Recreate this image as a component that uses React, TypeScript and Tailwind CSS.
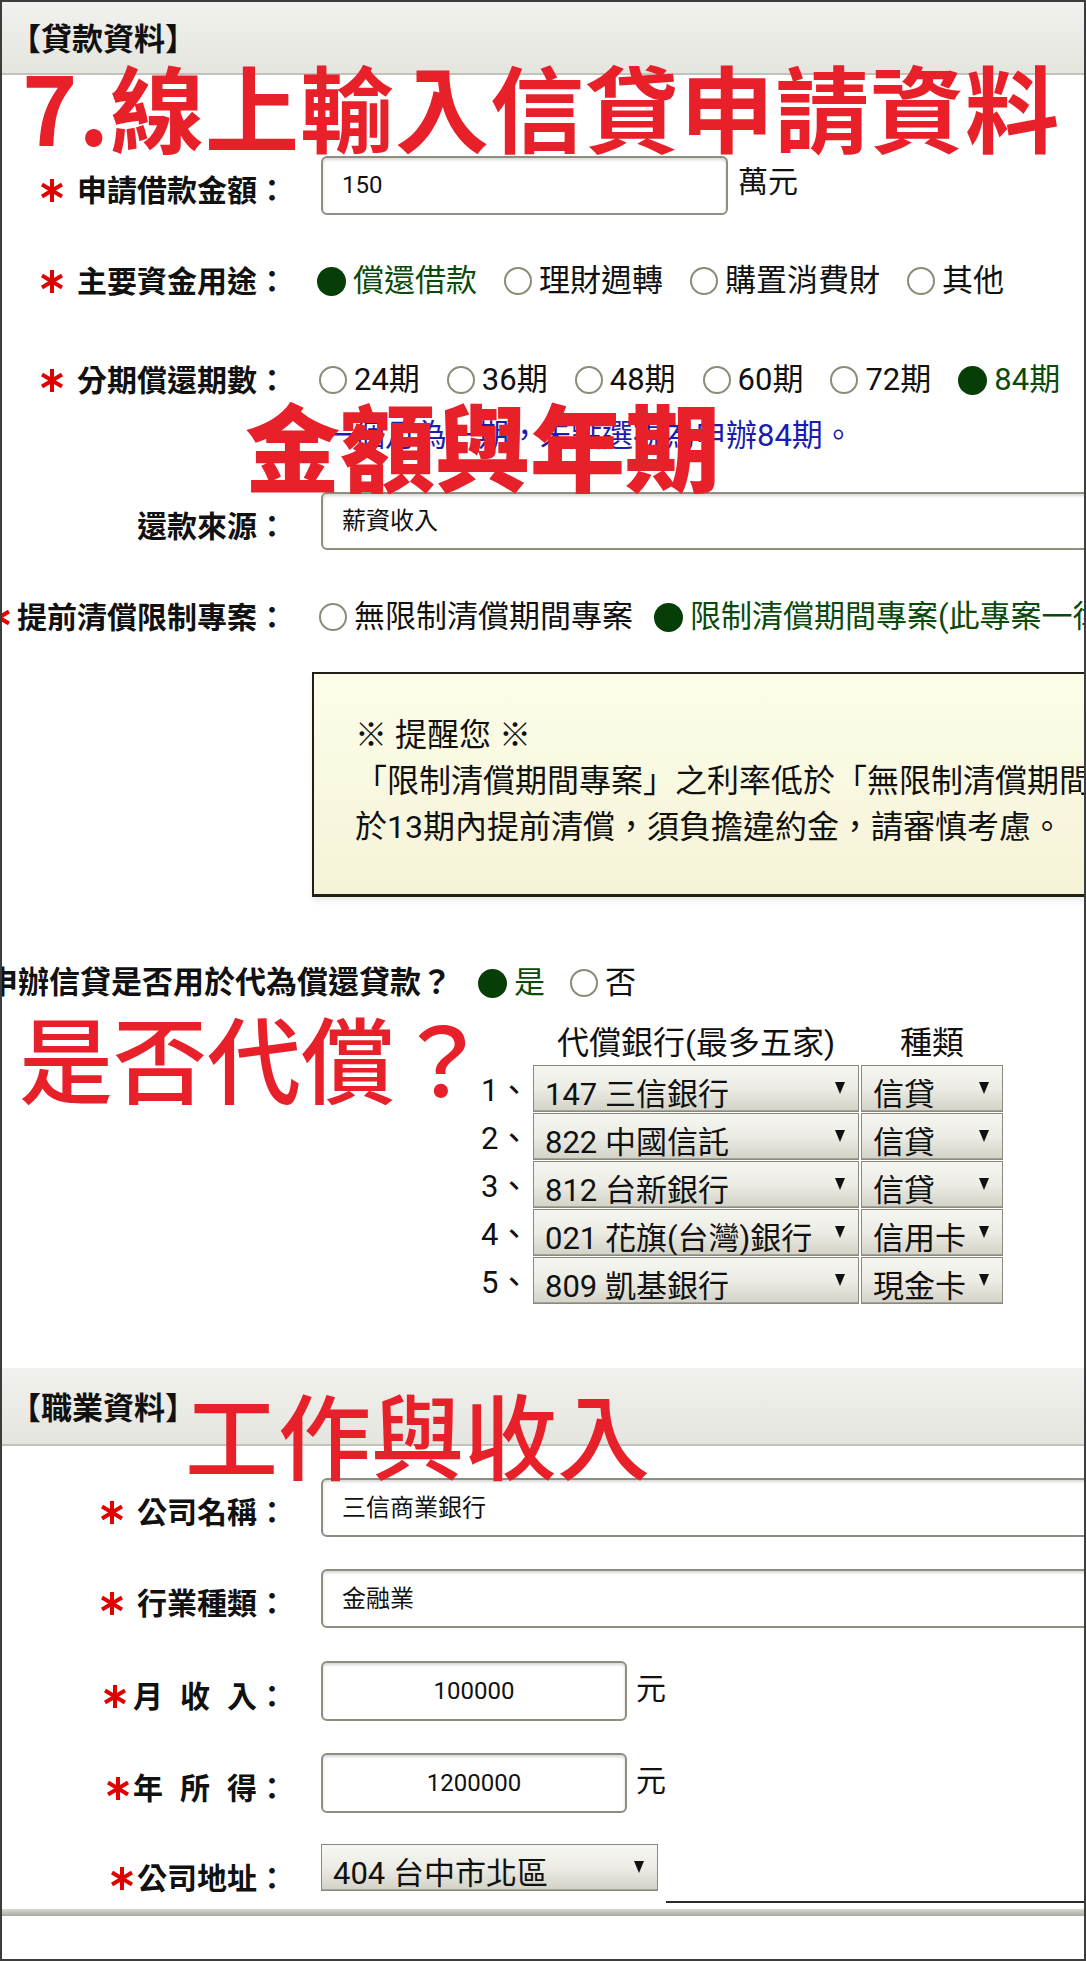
import React from "react";

const BANKS = [
  { bank: "147 三信銀行", kind: "信貸" },
  { bank: "822 中國信託", kind: "信貸" },
  { bank: "812 台新銀行", kind: "信貸" },
  { bank: "021 花旗(台灣)銀行", kind: "信用卡" },
  { bank: "809 凱基銀行", kind: "現金卡" },
];

function Star() {
  return (
    <svg width="22" height="23" viewBox="0 0 22 23" className="shrink-0">
      <g stroke="#e00000" strokeWidth="4">
        <line x1="11" y1="0" x2="11" y2="23" />
        <line x1="1" y1="5.5" x2="21" y2="17.5" />
        <line x1="1" y1="17.5" x2="21" y2="5.5" />
      </g>
    </svg>
  );
}

function Arrow() {
  return (
    <svg width="10" height="12" viewBox="0 0 10 12" className="shrink-0 mt-[16px]">
      <polygon points="0,0 10,0 5,12" fill="#111" />
    </svg>
  );
}

function Radio({ on, label }: { on?: boolean; label: string }) {
  return (
    <div className="flex items-center whitespace-nowrap">
      {on ? (
        <span className="w-[29px] h-[29px] rounded-full bg-[#073d07] shrink-0" />
      ) : (
        <span className="w-[28px] h-[28px] rounded-full border-2 border-[#8b8b79] bg-white shrink-0" />
      )}
      <span className={`ml-[7px] ${on ? "text-[#0a4a0a]" : "text-[#111]"}`}>{label}</span>
    </div>
  );
}

function Band({ title, className = "" }: { title: string; className?: string }) {
  return (
    <div
      className={`flex items-center pl-[8px] bg-gradient-to-b from-[#f1f1ed] to-[#e5e5e0] border-b-2 border-[#c2c2ba] text-[31px] font-bold font-['Noto_Sans_CJK_JP',sans-serif] ${className}`}
    >
      {title}
    </div>
  );
}

function Label({
  children,
  star = true,
  gap = 14,
  low = false,
}: {
  children: React.ReactNode;
  star?: boolean;
  gap?: number;
  low?: boolean;
}) {
  return (
    <div className={`w-[285px] shrink-0 flex justify-end items-center whitespace-nowrap font-bold text-[30px] ${low ? "pt-[10px]" : ""}`}>
      {star && <Star />}
      <span className={gap === 14 ? "ml-[14px]" : gap === 7 ? "ml-[7px]" : "ml-[4px]"}>{children}</span>
    </div>
  );
}

function Input({ value, className = "", center = false }: { value: string; className?: string; center?: boolean }) {
  return (
    <div
      className={`ml-[2px] shrink-0 rounded-[6px] border-2 border-[#8e8e80] bg-white shadow-[inset_0_2px_3px_rgba(0,0,0,0.16)] flex items-center text-[24px] whitespace-nowrap ${
        center ? "justify-center" : "pl-[19px]"
      } ${className}`}
    >
      {value}
    </div>
  );
}

function Select({ text, className = "" }: { text: string; className?: string }) {
  return (
    <div
      className={`flex shrink-0 border border-[#8a8a7e] bg-gradient-to-b from-[#f7f7f2] via-[#ececE5] to-[#d2d2c7] shadow-[inset_0_-1px_0_#a3a398] pl-[11px] pr-[13px] ${className}`}
    >
      <span className="flex-1 self-end pb-[1px] leading-none whitespace-nowrap text-[31px] overflow-hidden">{text}</span>
      <Arrow />
    </div>
  );
}

export default function App() {
  return (
    <div className="relative w-[1086px] h-[1961px] overflow-hidden bg-white border-2 border-[#3c3c3c] font-['Roboto','Noto_Sans_CJK_TC',sans-serif] text-[#111]">
      <Band title="【貸款資料】" className="h-[73px]" />

      {/* 申請借款金額 */}
      <div className="mt-[80px] h-[60px] flex items-center">
        <Label low>申請借款金額：</Label>
        <div className="ml-[32px] flex items-center">
          <Input value="150" className="w-[407px] h-[59px]" />
          <span className="ml-[10px] mb-[8px] text-[30px]">萬元</span>
        </div>
      </div>

      {/* 主要資金用途 */}
      <div className="mt-[36px] h-[60px] flex items-center">
        <Label>主要資金用途：</Label>
        <div className="ml-[30px] flex items-center gap-[27px] text-[31px]">
          <Radio on label="償還借款" />
          <Radio label="理財週轉" />
          <Radio label="購置消費財" />
          <Radio label="其他" />
        </div>
      </div>

      {/* 分期償還期數 */}
      <div className="mt-[39px] h-[60px] flex items-center">
        <Label>分期償還期數：</Label>
        <div className="ml-[32px] flex items-center gap-[27px] text-[31px]">
          <Radio label="24期" />
          <Radio label="36期" />
          <Radio label="48期" />
          <Radio label="60期" />
          <Radio label="72期" />
          <Radio on label="84期" />
        </div>
      </div>

      <div className="mt-[10px] h-[32px] flex items-center pl-[321px] text-[31px] text-[#1c1cb0] whitespace-nowrap">
        一個月為一期，未點選視為申辦84期。
      </div>

      {/* 還款來源 */}
      <div className="mt-[40px] h-[58px] flex items-center">
        <Label star={false} low>還款來源：</Label>
        <div className="ml-[32px] flex items-center">
          <Input value="薪資收入" className="w-[800px] h-[58px]" />
        </div>
      </div>

      {/* 提前清償限制專案 */}
      <div className="mt-[37px] h-[60px] flex items-center">
        <Label gap={7}>提前清償限制專案：</Label>
        <div className="ml-[32px] flex items-center gap-[21px] text-[31px]">
          <Radio label="無限制清償期間專案" />
          <Radio on label="限制清償期間專案(此專案一律適用)" />
        </div>
      </div>

      {/* 提醒 */}
      <div className="mt-[25px] ml-[310px] w-[900px] h-[225px] border-t-2 border-l-2 border-b-[3px] border-[#241f14] bg-gradient-to-b from-[#fdfde9] to-[#f5f3d7] shadow-[0_4px_6px_rgba(0,0,0,0.08)] pl-[41px] pt-[38px] text-[32px] leading-[46px] whitespace-nowrap">
        <div>※ 提醒您 ※</div>
        <div>「限制清償期間專案」之利率低於「無限制清償期間專案」，惟若</div>
        <div>於13期內提前清償，須負擔違約金，請審慎考慮。</div>
      </div>

      {/* 代償 */}
      <div className="mt-[66px] h-[40px] flex items-center">
        <div className="w-[450px] shrink-0 flex justify-end whitespace-nowrap font-bold text-[31px]">
          <span>申辦信貸是否用於代為償還貸款？</span>
        </div>
        <div className="ml-[26px] flex items-center gap-[25px] text-[31px]">
          <Radio on label="是" />
          <Radio label="否" />
        </div>
      </div>

      <div className="mt-[20px] ml-[479px] text-[31px]">
        <div className="flex h-[40px] items-center whitespace-nowrap">
          <div className="w-[52px]" />
          <div className="w-[326px] text-center text-[32px]">代償銀行(最多五家)</div>
          <div className="w-[2px]" />
          <div className="w-[142px] text-center text-[32px]">種類</div>
        </div>
        <div className="mt-[2px] flex flex-col gap-[1px]">
          {BANKS.map((b, i) => (
            <div key={i} className="flex h-[47px]">
              <div className="w-[52px] flex items-end pb-[6px] leading-none whitespace-nowrap">{i + 1}、</div>
              <Select text={b.bank} className="w-[326px]" />
              <Select text={b.kind} className="ml-[2px] w-[142px]" />
            </div>
          ))}
        </div>
      </div>

      <Band title="【職業資料】" className="mt-[64px] h-[78px]" />

      {/* 公司名稱 */}
      <div className="mt-[32px] h-[59px] flex items-center">
        <Label low>公司名稱：</Label>
        <div className="ml-[32px] flex items-center">
          <Input value="三信商業銀行" className="w-[800px] h-[59px]" />
        </div>
      </div>

      {/* 行業種類 */}
      <div className="mt-[32px] h-[59px] flex items-center">
        <Label low>行業種類：</Label>
        <div className="ml-[32px] flex items-center">
          <Input value="金融業" className="w-[800px] h-[59px]" />
        </div>
      </div>

      {/* 月收入 */}
      <div className="mt-[33px] h-[60px] flex items-center">
        <Label gap={7} low>
          <span className="tracking-[17px]">月收</span>入：
        </Label>
        <div className="ml-[32px] flex items-center">
          <Input value="100000" center className="w-[306px] h-[60px] text-[23px]" />
          <span className="ml-[9px] mb-[6px] text-[30px]">元</span>
        </div>
      </div>

      {/* 年所得 */}
      <div className="mt-[32px] h-[60px] flex items-center">
        <Label gap={4} low>
          <span className="tracking-[17px]">年所</span>得：
        </Label>
        <div className="ml-[32px] flex items-center">
          <Input value="1200000" center className="w-[306px] h-[60px] text-[23px]" />
          <span className="ml-[9px] mb-[6px] text-[30px]">元</span>
        </div>
      </div>

      {/* 公司地址 */}
      <div className="mt-[31px] h-[59px] flex items-stretch">
        <Label gap={4} low>公司地址：</Label>
        <div className="ml-[34px] flex items-start">
          <Select text="404 台中市北區" className="w-[337px] h-[47px] pl-[8px]" />
        </div>
        <div className="ml-[8px] flex-1 border-b-2 border-[#2a2a2a]" />
      </div>

      <div className="mt-[6px] h-[7px] bg-gradient-to-b from-[#d9d9d2] to-[#a9a9a0]" />

      {/* 紅字標註 */}
      <div className="absolute left-[20px] top-[56px] text-[94px] leading-none font-bold tracking-[1px] text-[#e8202a] whitespace-nowrap font-['Noto_Sans_CJK_TC',sans-serif]">
        7.線上輸入信貸申請資料
      </div>
      <div className="absolute left-[243px] top-[394px] text-[95px] leading-none font-black text-[#e8202a] whitespace-nowrap font-['Noto_Sans_CJK_TC',sans-serif]">
        金額與年期
      </div>
      <div className="absolute left-[17px] top-[1007px] text-[94px] leading-none font-medium text-[#e8202a] whitespace-nowrap font-['Noto_Sans_CJK_TC',sans-serif]">
        是否代償？
      </div>
      <div className="absolute left-[183px] top-[1384px] text-[93px] leading-none font-medium text-[#e8202a] whitespace-nowrap font-['Noto_Sans_CJK_TC',sans-serif]">
        工作與收入
      </div>
    </div>
  );
}
